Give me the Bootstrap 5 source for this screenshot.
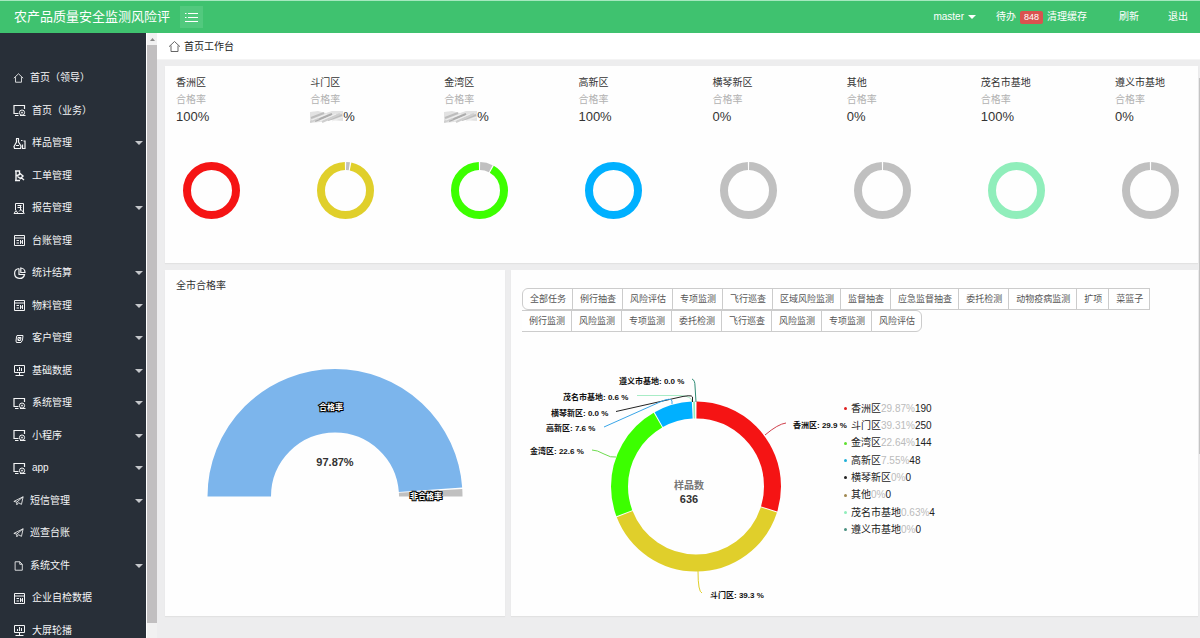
<!DOCTYPE html>
<html lang="zh-CN">
<head>
<meta charset="utf-8">
<meta name="viewport" content="width=device-width, initial-scale=1">
<title>农产品质量安全监测风险评</title>
<link href="https://cdn.jsdelivr.net/npm/bootstrap@5.3.0/dist/css/bootstrap.min.css" rel="stylesheet">
<style>
  body { font: 10px/16px "Liberation Sans", "Noto Sans CJK SC", sans-serif; color: #333; background: #ededee; }
  a { color: inherit; text-decoration: none; }
  svg { flex-shrink: 0; }
  .topbar { height: 33px; background: #3fc26f; border-top: 1px solid #a5e8bf; color: #fff; padding: 0 12px 0 14px; }
  .brand { font-size: 13px; }
  .toggler { width: 23px; height: 22px; margin-left: 10px; background: #52c97e; border: 0; color: #fff; }
  .count { background: #d9534f; border-radius: 2px; font-size: 9px; line-height: 13px; width: 23px; margin: 0 4px; }
  .tri { border: 4px solid transparent; border-top-color: currentColor; border-bottom: 0; }
  .icon { fill: none; stroke: currentColor; }
  .shell { height: calc(100vh - 33px); }
  .side { width: 146px; background: #282f38; color: #f4f5f6; overflow-y: auto; scrollbar-width: none; }
  .side::-webkit-scrollbar, .work::-webkit-scrollbar { display: none; }
  .menu { display: grid; grid-auto-rows: 32px 33px; padding: 29px 3px 0 13px; }
  .menu a { display: flex; align-items: center; gap: 6px; }
  .menu .tri { margin-left: auto; color: #c5c8cb; }
  .menu .icon { width: 13px; height: 13px; }
  .menu .icon.slim { width: 11px; height: 12px; }
  .track { width: 11px; background: #f1f1f1; border-left: 1px solid #fff; }
  .track .up { height: 12px; color: #888; }
  .track .thumb { height: 578px; background: #c1bfc0; }
  .work { min-width: 0; overflow-y: auto; scrollbar-width: none; }
  .crumb { height: 27px; background: #fff; padding: 1px 0 0 11px; gap: 3px; color: #222; border-bottom: 1px solid #f4f4f4; }
  .crumb .icon { color: #666; }
  .panels { padding: 6px 2px 0 8px; display: grid; gap: 7px; }
  .panel { background: #fefefe; padding: 8px 11px; box-shadow: 0 1px 1px #e2e2e2; }
  .rates { height: 197px; }
  .rate { width: 72px; line-height: 17px; }
  .rate .sub { color: #b2b2b2; }
  .rate .num { font-size: 13px; display: flex; align-items: center; }
  .rate .ring { display: block; margin: 37px 0 0 7px; }
  .lower { display: grid; grid-template-columns: 340fr 687fr; gap: 6px; }
  .lower .panel { height: 346px; }
  .half { display: block; margin: 75px auto 0; }
  .tasks { display: flex; flex-wrap: wrap; overflow: hidden; margin-top: 10px; }
  .tasks .btn { --bs-btn-border-radius: 3px; flex: none; height: 22px; padding: 0 6px 0 7px; font-size: 9px; line-height: 20px; color: #555; border-color: #ccc; background: #fff; }
  .tasks .btn:not(:first-child) { margin-left: -1px; }
  .chart { margin-top: 34px; }
  .chart svg { overflow: visible; }
  .legend { display: grid; grid-auto-rows: 17px 17px 18px; margin: 34px 0 0; padding: 0; list-style: none; }
  .legend li { display: flex; align-items: center; color: #222; }
  .legend i { width: 3px; height: 3px; border-radius: 50%; margin: 0 4px 0 1px; }
  .legend .pct { color: #bbb; }
  svg text { font-family: "Liberation Sans", "Noto Sans CJK SC", sans-serif; font-weight: bold; }
  .tag { font-size: 8px; fill: #111; }
  .halo { font-size: 8px; fill: #fff; stroke: #000; stroke-width: 2px; paint-order: stroke; text-anchor: middle; }
  .edge { width: 1px; height: 376px; right: 0; top: 45px; background: #c4c4c4; }
</style>
</head>
<body>
<svg width="0" height="0" class="position-absolute">
  <symbol id="home" viewBox="0 0 13 13"><path d="M1 6.700 6.500 1.500 12 6.700M3 5.500V11.500H10V5.500" /></symbol>
  <symbol id="desk" viewBox="0 0 13 13"><path d="M5.500 9.500H1V1.500H11.500V5M2 11.500H5.500" stroke-width="1.200"/><circle cx="9" cy="8.600" r="2.600"/><circle cx="9" cy="8.600" r=".6"/><path d="M7 11.500h5.500"/></symbol>
  <symbol id="flask" viewBox="0 0 13 13"><path d="M3 1.500h3M3.500 1.500V5L1 9.500 1.500 11.500H7.500L8 9 5.500 5V1.500M8 3.500h1.500M9.500 7.500v4H12V4H10.500M3 8.500h3" stroke-width="1.200"/></symbol>
  <symbol id="order" viewBox="0 0 13 13"><path d="M3 2V11.500M2 2H6.500V5.500L3 7M6.500 4 10 7 7.500 9.500 4.500 7.500M8 8.500 11 11M2 11.500H7" stroke-width="1.400"/></symbol>
  <symbol id="report" viewBox="0 0 13 13"><path d="M2.500 8V1.500H10.500V11.500H5M4.500 3.500h4M4.500 5.500h4M7.500 4v4M1 11.500 3 8.500 5 11.500ZM6 9.500 8 7.500 11.500 11.500"/></symbol>
  <symbol id="ledger" viewBox="0 0 13 13"><path d="M1.500 1.500H11.500V11.500H1.500ZM1.500 4H11.500M3.500 6.500h2.500M3.500 9h2.500M7.500 6v4M9.500 6v4M7 8h3"/></symbol>
  <symbol id="pie" viewBox="0 0 13 13"><path d="M5.800 1.500A5 5 0 1 0 11.500 7.500H6V1.500M7.800 1A4.500 4.500 0 0 1 12 5.500H7.800Z" stroke-width="1.200"/></symbol>
  <symbol id="client" viewBox="0 0 13 13"><path d="M4 3.500H10L9.500 8 8 10.500H3.500L3 9 3.500 5ZM5 5.500H8L7.500 8.500H5ZM5 8 8 5.500"/></symbol>
  <symbol id="screen" viewBox="0 0 13 13"><path d="M1.500 1.500H11.500V8.500H1.500ZM4.500 5V7M6.500 3V7M8.500 4V7M6.500 8.500V11M2.500 11.500H10.500"/></symbol>
  <symbol id="plane" viewBox="0 0 13 13"><path d="M1 7 12 1.500 10 10.500 6.500 8.500 4.500 11V7.800L12 1.500M1 7 4.500 7.800"/></symbol>
  <symbol id="file" viewBox="0 0 13 13"><path d="M2.500 1.500H8L11 4.500V11.500H2.500ZM8 1.500V4.500H11"/></symbol>
</svg>

<header class="topbar d-flex align-items-center">
  <a class="brand" href="#">农产品质量安全监测风险评</a>
  <button class="toggler d-flex align-items-center justify-content-center p-0" type="button" aria-label="菜单">
    <svg width="13" height="9" fill="none" stroke="currentColor"><path d="M3 .5H13M3 4.500H13M0 8.500H13M0 .5H1.500M0 4.500H1.500"/></svg>
  </button>
  <a class="d-flex align-items-center gap-1 ms-auto" href="#">master <span class="tri"></span></a>
  <a class="d-flex align-items-center" style="margin-left:20px" href="#">待办<span class="count text-center">848</span></a>
  <a href="#">清理缓存</a>
  <a style="margin-left:32px" href="#">刷新</a>
  <a style="margin-left:29px" href="#">退出</a>
</header>

<div class="shell d-flex position-relative">
  <nav class="side flex-shrink-0">
    <div class="menu">
      <a href="#"><svg class="icon slim"><use href="#home"/></svg>首页（领导）</a>
      <a href="#"><svg class="icon"><use href="#desk"/></svg>首页（业务）</a>
      <a href="#"><svg class="icon"><use href="#flask"/></svg>样品管理<span class="tri"></span></a>
      <a href="#"><svg class="icon"><use href="#order"/></svg>工单管理</a>
      <a href="#"><svg class="icon"><use href="#report"/></svg>报告管理<span class="tri"></span></a>
      <a href="#"><svg class="icon"><use href="#ledger"/></svg>台账管理</a>
      <a href="#"><svg class="icon"><use href="#pie"/></svg>统计结算<span class="tri"></span></a>
      <a href="#"><svg class="icon"><use href="#ledger"/></svg>物料管理<span class="tri"></span></a>
      <a href="#"><svg class="icon"><use href="#client"/></svg>客户管理<span class="tri"></span></a>
      <a href="#"><svg class="icon"><use href="#screen"/></svg>基础数据<span class="tri"></span></a>
      <a href="#"><svg class="icon"><use href="#desk"/></svg>系统管理<span class="tri"></span></a>
      <a href="#"><svg class="icon"><use href="#desk"/></svg>小程序<span class="tri"></span></a>
      <a href="#"><svg class="icon"><use href="#desk"/></svg>app<span class="tri"></span></a>
      <a href="#"><svg class="icon slim"><use href="#plane"/></svg>短信管理<span class="tri"></span></a>
      <a href="#"><svg class="icon slim"><use href="#plane"/></svg>巡查台账</a>
      <a href="#"><svg class="icon slim"><use href="#file"/></svg>系统文件<span class="tri"></span></a>
      <a href="#"><svg class="icon"><use href="#ledger"/></svg>企业自检数据</a>
      <a href="#"><svg class="icon"><use href="#screen"/></svg>大屏轮播</a>
    </div>
  </nav>
  <div class="track flex-shrink-0 overflow-hidden">
    <div class="up d-flex align-items-center justify-content-center"><svg width="5" height="3" fill="currentColor"><path d="M0 3 2.500 0 5 3Z"/></svg></div>
    <div class="thumb"></div>
  </div>

  <main class="work flex-grow-1">
    <div class="crumb d-flex align-items-center"><svg class="icon" width="13" height="13"><use href="#home"/></svg>首页工作台</div>
    <div class="panels">
      <section class="panel rates d-flex justify-content-between" id="rates"></section>

      <div class="lower">
        <section class="panel">
          <div>全市合格率</div>
          <svg class="half" width="256" height="134" viewBox="207 369 256 134">
            <g fill="none" stroke-width="63.500">
              <path d="M239.250 496.500A95.750 95.750 0 0 1 430.750 496.500" pathLength="100" stroke="#7cb5ec" stroke-dasharray="97.700 100"/>
              <path d="M239.250 496.500A95.750 95.750 0 0 1 430.750 496.500" pathLength="100" stroke="#c0c0c0" stroke-dasharray="0 98.100 1.900 10"/>
            </g>
            <text class="halo" x="331" y="410">合格率</text>
            <text class="halo" x="426" y="499">非合格率</text>
            <text x="335" y="466" font-size="11" fill="#333" text-anchor="middle">97.87%</text>
          </svg>
        </section>

        <section class="panel">
          <div class="tasks" id="tasks"></div>
          <div class="chart d-flex">
            <svg width="321" height="240" viewBox="522 366 321 240">
              <g fill="none" stroke-width="17" transform="rotate(-90 696 486.500)" id="share"></g>
              <g fill="none">
                <path stroke="#2e8b74" d="M692 379Q695 380 695 386L696 402"/>
                <path stroke="#a8ecc6" d="M637 395.500H680Q692 396 692 402"/>
                <path stroke="#222" d="M616 411.500 676 398Q692 394 692.500 397V402"/>
                <path stroke="#3aa6e8" d="M604 427 660 402Q671 397 672 401V404"/>
                <path stroke="#6fdc50" d="M592 450Q597 450 604 454T616 457"/>
                <path stroke="#d0404c" d="M765 435Q778 424 786 423"/>
                <path stroke="#e0cf2b" d="M698 571Q698 592 702 593"/>
              </g>
              <g class="tag">
                <text x="619" y="384">遵义市基地: 0.0 %</text>
                <text x="563" y="400">茂名市基地: 0.6 %</text>
                <text x="551" y="416">横琴新区: 0.0 %</text>
                <text x="546" y="431">高新区: 7.6 %</text>
                <text x="530" y="454">金湾区: 22.6 %</text>
                <text x="793" y="428">香洲区: 29.9 %</text>
                <text x="710" y="598">斗门区: 39.3 %</text>
              </g>
              <g text-anchor="middle">
                <text x="689" y="489" font-size="10" fill="#777">样品数</text>
                <text x="689" y="503" font-size="11" fill="#333">636</text>
              </g>
            </svg>
            <ul class="legend" id="legend"></ul>
          </div>
        </section>
      </div>
    </div>
  </main>
  <div class="edge position-absolute"></div>
</div>

<script src="https://cdn.jsdelivr.net/npm/bootstrap@5.3.0/dist/js/bootstrap.bundle.min.js"></script>
<script>
  // Name, pass rate shown (null: hidden figure), ring share, ring colour
  const rates = [
    ['香洲区', '100', 100, '#f51414'], ['斗门区', null, 97, '#e0cf2b'], ['金湾区', null, 92, '#3cff00'],
    ['高新区', '100', 100, '#00b0ff'], ['横琴新区', '0', 0, '#c0c0c0'], ['其他', '0', 0, '#c0c0c0'],
    ['茂名市基地', '100', 100, '#90eebb'], ['遵义市基地', '0', 0, '#c0c0c0']
  ];
  const smudge = `<svg width="33" height="13" viewBox="0 0 33 13"><path fill="#e2e2e2" d="M0 2 8 1 16 3 22 1H33V11L20 10 10 12 0 13Z"/>
    <g stroke-width="2" fill="none"><path stroke="#bdbdbd" d="M1 8 14 3M18 10 32 5"/><path stroke="#adadad" d="M5 11 22 4"/><path stroke="#cfcfcf" d="M0 12 9 8M12 12 30 4"/><path stroke="#efefef" stroke-width="1" d="M2 10 17 4M10 11 26 4M22 11 33 7"/></g></svg>`;
  // A ring segment from one percentage to another, on a circle of length 100
  const arc = (cx, cy, r, from, to, color) =>
    `<circle cx="${cx}" cy="${cy}" r="${r}" pathLength="100" stroke="${color}" stroke-dasharray="0 ${from} ${to - from} 100"/>`;
  document.getElementById('rates').innerHTML = rates.map(([name, num, share, color]) => {
    let ring;
    if (share === 100) ring = `<circle cx="28.500" cy="28.500" r="24.500" stroke="${color}"/>`;
    else if (share === 0) ring = arc(28.500, 28.500, 24.500, .4, 99.600, color);
    else ring = arc(28.500, 28.500, 24.500, .4, 99.600 - share, '#c0c0c0') + arc(28.500, 28.500, 24.500, 100.400 - share, 99.600, color);
    return `<div class="rate"><div>${name}</div><div class="sub">合格率</div><div class="num">${num ?? smudge}%</div>
      <svg class="ring" width="57" height="57"><g fill="none" stroke-width="8" transform="rotate(-90 28.500 28.500)">${ring}</g></svg></div>`;
  }).join('');

  const tasks = ['全部任务', '例行抽查', '风险评估', '专项监测', '飞行巡查', '区域风险监测', '监督抽查', '应急监督抽查', '委托检测',
    '动物疫病监测', '扩项', '菜篮子', '例行监测', '风险监测', '专项监测', '委托检测', '飞行巡查', '风险监测', '专项监测', '风险评估'];
  document.getElementById('tasks').innerHTML = tasks.map((t, i) =>
    `<button type="button" class="btn ${i === 0 ? 'rounded-0 rounded-start' : i === tasks.length - 1 ? 'rounded-0 rounded-end' : 'rounded-0'}">${t}</button>`).join('');

  document.getElementById('share').innerHTML = [
    [.1, 29.750, '#f51414'], [29.950, 69.100, '#e0cf2b'], [69.300, 91.700, '#3cff00'], [91.900, 99.200, '#00b0ff'], [99.450, 99.800, '#90eebb']
  ].map(([a, b, c]) => arc(696, 486.500, 76.500, a, b, c)).join('');

  document.getElementById('legend').innerHTML = [
    ['香洲区', '29.87%', 190, '#e02020'], ['斗门区', '39.31%', 250, 'transparent'], ['金湾区', '22.64%', 144, '#5fe030'],
    ['高新区', '7.55%', 48, '#20b0d8'], ['横琴新区', '0%', 0, '#222'], ['其他', '0%', 0, '#a08850'],
    ['茂名市基地', '0.63%', 4, '#90eebb'], ['遵义市基地', '0%', 0, '#4a9080']
  ].map(([n, p, v, c]) => `<li><i style="background:${c}"></i>${n}<span class="pct">${p}</span>${v}</li>`).join('');
</script>
</body>
</html>
